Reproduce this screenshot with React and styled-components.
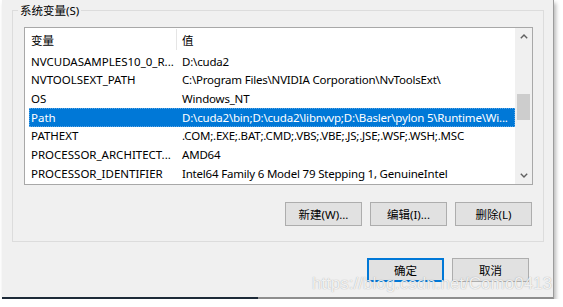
import React from 'react';
import styled, {createGlobalStyle} from 'styled-components';

const GlobalStyle = createGlobalStyle`
  html, body {
    margin: 0;
    padding: 0;
    background: #ffffff;
  }

  body {
    font-family: "Noto Sans", "Noto Sans CJK SC", sans-serif;
    font-size: 11.5px;
    color: #000;
  }
`;

const rows = [
    {name: 'NVCUDASAMPLES10_0_R...', value: 'D:\\cuda2'},
    {name: 'NVTOOLSEXT_PATH', value: 'C:\\Program Files\\NVIDIA Corporation\\NvToolsExt\\'},
    {name: 'OS', value: 'Windows_NT'},
    {name: 'Path', value: 'D:\\cuda2\\bin;D:\\cuda2\\libnvvp;D:\\Basler\\pylon 5\\Runtime\\Wi...', selected: true},
    {name: 'PATHEXT', value: '.COM;.EXE;.BAT;.CMD;.VBS;.VBE;.JS;.JSE;.WSF;.WSH;.MSC'},
    {name: 'PROCESSOR_ARCHITECT...', value: 'AMD64'},
    {name: 'PROCESSOR_IDENTIFIER', value: 'Intel64 Family 6 Model 79 Stepping 1, GenuineIntel'},
];

const Chevron = ({down}) => (
    <svg width="8" height="5" viewBox="0 0 8 5">
        <path d={down ? 'M0.8 0.8 L4 4 L7.2 0.8' : 'M0.8 4.2 L4 1 L7.2 4.2'}
              fill="none" stroke="#606060" strokeWidth="1.4"/>
    </svg>
);

const App = () => {
    return (
        <>
            <GlobalStyle/>
            <Window>
                <Group>
                    <Legend>系统变量(S)</Legend>
                    <ListBox>
                        <ListContent>
                            <HeaderRow>
                                <HeaderCell divider>变量</HeaderCell>
                                <HeaderCell>值</HeaderCell>
                            </HeaderRow>
                            {rows.map(row => (
                                <Row key={row.name} selected={row.selected}>
                                    <NameCell>{row.name}</NameCell>
                                    <ValueCell>{row.value}</ValueCell>
                                </Row>
                            ))}
                        </ListContent>
                        <ScrollBar>
                            <ArrowBox><Chevron/></ArrowBox>
                            <Track>
                                <Thumb/>
                            </Track>
                            <ArrowBox><Chevron down/></ArrowBox>
                        </ScrollBar>
                    </ListBox>
                    <ButtonRow>
                        <Button>新建(W)...</Button>
                        <Button>编辑(I)...</Button>
                        <Button>删除(L)</Button>
                    </ButtonRow>
                </Group>
                <DialogButtons>
                    <Button primary>确定</Button>
                    <Button>取消</Button>
                </DialogButtons>
                <Watermark>https://blog.csdn.net/Como0413</Watermark>
            </Window>
        </>
    );
};

const Window = styled.div`
  position: relative;
  width: 551px;
  height: 295px;
  margin-left: 2px;
  padding-top: 2px;
  background: #f0f0f0;
  border-right: 1px solid #9c9c9c;
  border-bottom: 2px solid #8e8e8e;
  box-shadow: 2px 3px 4px rgba(0, 0, 0, 0.28);
  display: flex;
  flex-direction: column;

  /* dark strip on the left part of the bottom edge */
  &::after {
    content: '';
    position: absolute;
    left: 0;
    bottom: -2px;
    width: 256px;
    height: 2px;
    background: #1d2a38;
  }
`;

const Group = styled.fieldset`
  margin: 0 9px 0 10px;
  padding: 8px 10px 15px 11px;
  border: 1px solid #dcdcdc;
  min-width: 0;
`;

const Legend = styled.legend`
  margin-left: -6px;
  padding: 0 2px;
  line-height: 17px;
  color: #000;
`;

const ListBox = styled.div`
  height: 156px;
  border: 1px solid #a8a8a8;
  background: #fff;
  display: grid;
  grid-template-columns: 1fr 17px;
`;

const ListContent = styled.div`
  overflow: hidden;
`;

const HeaderRow = styled.div`
  display: grid;
  grid-template-columns: 148px 1fr;
  height: 24px;
  margin-left: 4px;
`;

const HeaderCell = styled.div`
  display: flex;
  align-items: center;
  padding-left: ${props => props.divider ? '2px' : '5px'};
  border-right: ${props => props.divider ? '1px solid #e5e5e5' : 'none'};
  margin: 1px 0 2px;
`;

const Row = styled.div`
  display: grid;
  grid-template-columns: 148px 1fr;
  height: 18.67px;
  margin-left: 4px;
  align-items: center;
  white-space: nowrap;
  background: ${props => props.selected ? '#0078d7' : 'transparent'};
  color: ${props => props.selected ? '#fff' : '#000'};
  outline: ${props => props.selected ? '1px dotted #5aa6e6' : 'none'};
  outline-offset: -1px;
`;

const NameCell = styled.div`
  padding-left: 2px;
  overflow: hidden;
`;

const ValueCell = styled.div`
  padding-left: 5px;
  overflow: hidden;
  letter-spacing: -0.2px;
`;

const ScrollBar = styled.div`
  background: #f0f0f0;
  display: flex;
  flex-direction: column;
`;

const ArrowBox = styled.div`
  height: 17px;
  display: flex;
  align-items: center;
  justify-content: center;
`;

const Track = styled.div`
  flex: 1;
  display: flex;
  justify-content: center;
`;

const Thumb = styled.div`
  width: 13px;
  height: 26px;
  margin-top: 49px;
  background: #cdcdcd;
`;

const ButtonRow = styled.div`
  display: flex;
  justify-content: flex-end;
  gap: 8px;
  margin-top: 17px;
  margin-right: 1px;
`;

const Button = styled.div`
  box-sizing: border-box;
  width: 77px;
  height: 24px;
  display: flex;
  align-items: center;
  justify-content: center;
  background: #e1e1e1;
  border: ${props => props.primary ? '2px solid #0078d7' : '1px solid #adadad'};
  color: #000;
`;

const DialogButtons = styled.div`
  display: flex;
  justify-content: flex-end;
  gap: 8px;
  margin-top: 16px;
  margin-right: 24px;
`;

const Watermark = styled.div`
  position: absolute;
  right: 1px;
  bottom: 3px;
  font-family: "Liberation Sans", Arial, sans-serif;
  font-size: 17px;
  color: rgba(255, 255, 255, 0.85);
  text-shadow: 0 0 1px rgba(90, 90, 90, 0.55);
  pointer-events: none;
`;

export default App;
